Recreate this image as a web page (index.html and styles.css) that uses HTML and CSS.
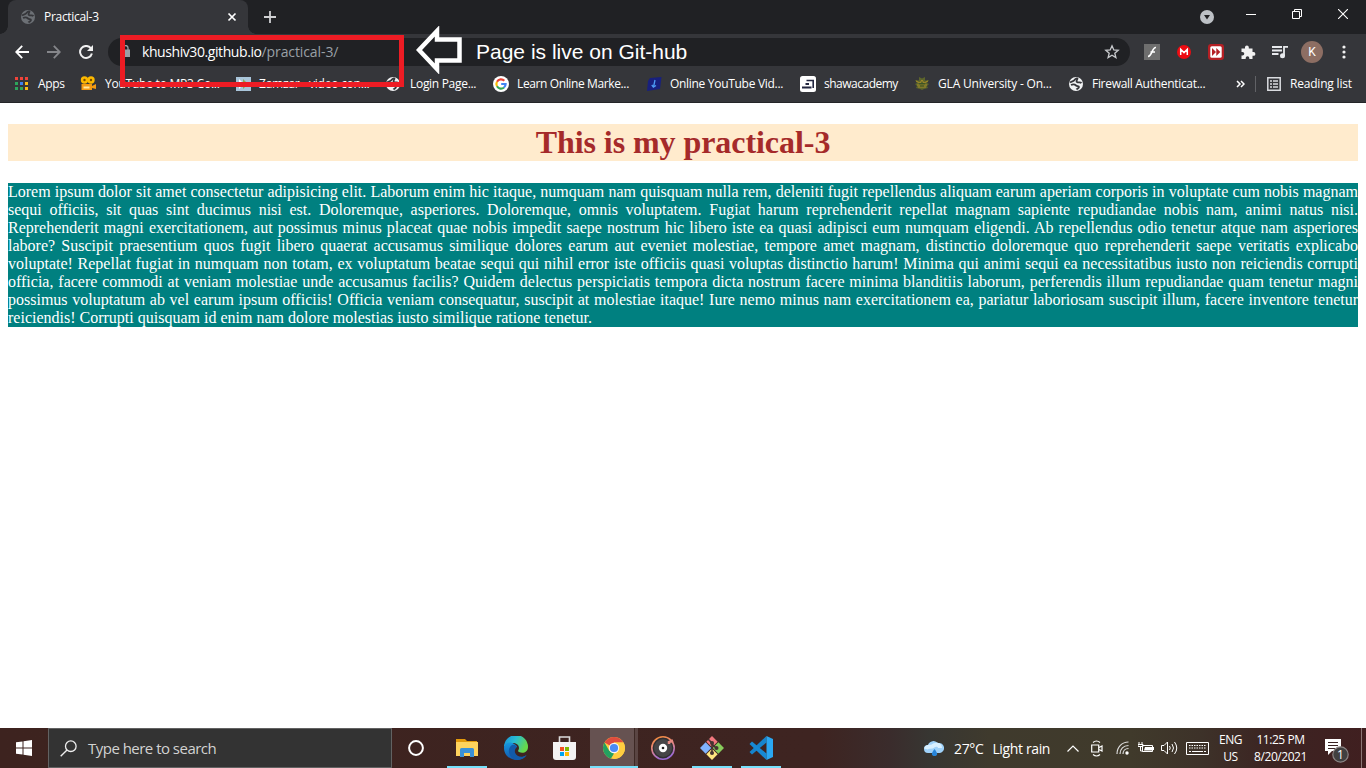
FILE: index.html
```html
<!DOCTYPE html>
<html lang="en">
<head>
<meta charset="utf-8">
<title>Practical-3</title>
<link rel="stylesheet" href="styles.css">
</head>
<body>
<div class="screen">
  <header class="tabstrip">
    <div class="tab">
      <svg class="i16" viewBox="0 0 16 16"><circle cx="8" cy="8" r="7" fill="#6c7075"/><path d="M2 6.500C3.500 5 5.500 5.500 6.500 4S9 2 9.500 2.500 7.500 5 9 6s3-.5 4.500 1M3 9c2-1 4-.5 5 .5s3 0 3 1.500-2 1.500-2.500 2.500" fill="none" stroke="#35363a" stroke-width="1.800"/></svg>
      <span class="tab-title">Practical-3</span>
      <svg class="tab-close" viewBox="0 0 10 10"><path d="M1.500 1.500l7 7M8.500 1.500l-7 7" stroke="#fff" stroke-width="1.700"/></svg>
    </div>
    <svg class="newtab" viewBox="0 0 12 12"><path d="M6 0v12M0 6h12" stroke="#d0d1d3" stroke-width="1.800"/></svg>
    <div class="winctl">
      <svg width="14" height="14" viewBox="0 0 14 14"><circle cx="7" cy="7" r="7" fill="#bdc1c6"/><path d="M4 5h6L7 9.500z" fill="#202124"/></svg>
      <svg class="min" width="10" height="10" viewBox="0 0 10 10"><path d="M0 5.500h10" stroke="#fff"/></svg>
      <svg class="restore" width="10" height="10" viewBox="0 0 10 10"><path d="M.5 2.500h7v7h-7zM2.500 2.500v-2h7v7h-2" fill="none" stroke="#fff"/></svg>
      <svg class="close" width="10" height="10" viewBox="0 0 10 10"><path d="M0 0l10 10M10 0L0 10" stroke="#fff" stroke-width="1.100"/></svg>
    </div>
  </header>

  <div class="toolbar">
    <div class="nav">
      <svg width="14" height="14" viewBox="0 0 14 14"><path d="M14 7H1.500M7.200 .8L1.200 7l6 6.200" fill="none" stroke="#fff" stroke-width="1.800"/></svg>
      <svg width="14" height="14" viewBox="0 0 14 14"><path d="M0 7h12.500M6.800 .8l6 6.200-6 6.200" fill="none" stroke="#85868a" stroke-width="1.800"/></svg>
      <svg width="14" height="14" viewBox="0 0 14 14"><path d="M11.800 3.200A6 6 0 1 0 12.900 8.500" fill="none" stroke="#f1f1f1" stroke-width="2"/><path d="M14 0v6H8z" fill="#f1f1f1"/></svg>
    </div>
    <div class="omnibox">
      <svg class="lock" width="9" height="12" viewBox="0 0 9 12"><path d="M0 4.500h9V12H0z" fill="#9aa0a6"/><path d="M2 5V3a2.400 2.400 0 0 1 5 0v2" fill="none" stroke="#9aa0a6" stroke-width="1.300"/></svg>
      <div class="url"><span class="host">khushiv30.github.io</span><span class="path">/practical-3/</span></div>
      <svg class="star" width="16" height="16" viewBox="0 0 16 16"><path d="M8 1.800l1.800 4.100 4.400.4-3.400 2.900 1.100 4.400L8 11.300l-3.900 2.300 1.100-4.400-3.400-2.900 4.400-.4z" fill="none" stroke="#c8cacd" stroke-width="1.300"/></svg>
    </div>
    <div class="exts">
      <svg width="16" height="16" viewBox="0 0 16 16"><path d="M0 0h16v16H0z" fill="#6e6e6e"/><path d="M12 3.500C8 3 8 12.500 4 12.300M6.500 8H11" fill="none" stroke="#fff" stroke-width="1.700"/></svg>
      <svg width="16" height="16" viewBox="0 0 16 16"><circle cx="8" cy="8" r="7" fill="#ed0c12"/><path d="M4.700 11V5.300L8 8.600l3.300-3.300V11" fill="none" stroke="#fff" stroke-width="1.500"/></svg>
      <svg width="16" height="16" viewBox="0 0 16 16"><rect width="16" height="16" rx="3" fill="#b51f24"/><rect x="2.300" y="2.300" width="11.400" height="11.400" rx="1.500" fill="#fff"/><path d="M4 4l4 4-4 4zM8.300 4l4 4-4 4z" fill="#b51f24"/></svg>
      <svg width="16" height="16" viewBox="0 0 16 16"><path d="M1.500 4.500H5V3.300a1.900 1.900 0 0 1 3.800 0v1.200h3.700V8h1a1.900 1.900 0 0 1 0 3.800h-1V15H9.300v-1a1.800 1.800 0 0 0-3.600 0v1H1.500v-3.500h1a1.800 1.800 0 0 0 0-3.600h-1z" fill="#f1f1f1"/></svg>
      <svg width="17" height="14" viewBox="0 0 17 14"><path d="M0 2h10M0 5.500h10M0 9h6.500M12 11V1.800h4" fill="none" stroke="#e8eaed" stroke-width="1.800"/><circle cx="10.500" cy="10.800" r="2.500" fill="#e8eaed"/></svg>
      <div class="avatar">K</div>
      <svg width="4" height="14" viewBox="0 0 4 14"><g fill="#f1f1f1"><circle cx="2" cy="2" r="1.600"/><circle cx="2" cy="7" r="1.600"/><circle cx="2" cy="12" r="1.600"/></g></svg>
    </div>
  </div>

  <nav class="bookmarks">
    <div class="bm apps-bm"><svg class="i16" viewBox="0 0 16 16"><path d="M2 1h3v3H2zM7 1h3v3H7zM12 1h3v3h-3z" fill="#f0443a"/><path d="M2 6h3v3H2zM2 11h3v3H2zM7 11h3v3H7z" fill="#2da55b"/><path d="M7 6h3v3H7z" fill="#3b82f0"/><path d="M12 6h3v3h-3zM12 11h3v3h-3z" fill="#f9bc15"/></svg><span>Apps</span></div>
    <div class="bm youtube"><svg class="i16" viewBox="0 0 16 16"><circle cx="4.500" cy="4" r="3.700" fill="#fcb900"/><circle cx="11" cy="4" r="3.700" fill="#fcb900"/><circle cx="4.500" cy="4" r="1.200" fill="#7a4b00"/><circle cx="11" cy="4" r="1.200" fill="#7a4b00"/><path d="M1.500 8H12v6H1.500zM12 10l4-2v5l-4-1z" fill="#f39a12"/><path d="M3.500 10.500h6v2h-6z" fill="#ffe9a0"/></svg><span>YouTube to MP3 Co...</span></div>
    <div class="bm zamzar"><svg class="i16" viewBox="0 0 16 16"><path d="M1 1h15v14H1z" fill="#a9c5da"/><path d="M4 3l5 5-5 5z" fill="#fff"/><path d="M8 3l5 5-5 5z" fill="#88ad58"/></svg><span>Zamzar - video con...</span></div>
    <div class="bm login"><svg class="i16" viewBox="0 0 16 16"><circle cx="8" cy="8" r="7" fill="#f1f3f4"/><path d="M2 6.500C3.500 5 5.500 5.500 6.500 4S9 2 9.500 2.500 7.500 5 9 6s3-.5 4.500 1M3 9c2-1 4-.5 5 .5s3 0 3 1.500-2 1.500-2.500 2.500" fill="none" stroke="#35363a" stroke-width="1.800"/></svg><span>Login Page...</span></div>
    <div class="bm learn"><svg class="i16" viewBox="0 0 16 16"><circle cx="8" cy="8" r="8" fill="#fff"/><g fill="none" stroke-width="2.200"><path d="M4 5.700A4.600 4.600 0 0 1 11.300 4.800" stroke="#ea4335"/><path d="M4 10.300a4.600 4.600 0 0 1 0-4.600" stroke="#fbbc05"/><path d="M4 10.300a4.600 4.600 0 0 0 7 1.200" stroke="#34a853"/><path d="M11 11.500A4.600 4.600 0 0 0 12.600 8H8.200" stroke="#4285f4"/></g></svg><span>Learn Online Marke...</span></div>
    <div class="bm video"><svg class="i16" viewBox="0 0 16 16"><path d="M4 2l11.500-1-1.500 12-13 2L2 5z" fill="#18207e"/><path d="M9 4l-1.500 7M5.800 9l1.600 2.200L10 9.500" fill="none" stroke="#4d9cf5" stroke-width="1.300"/></svg><span>Online YouTube Vid...</span></div>
    <div class="bm shaw"><svg class="i16" viewBox="0 0 16 16"><rect width="16" height="16" rx="2.500" fill="#fff"/><path d="M6.500 4.500h6.700V12" fill="none" stroke="#222640" stroke-width="1.600"/><path d="M5.500 8H9M2 11.500h9.500" fill="none" stroke="#222640" stroke-width="1.800"/></svg><span>shawacademy</span></div>
    <div class="bm gla"><svg class="i16" viewBox="0 0 16 16"><path d="M1 4l4 .5L5 1l3 1.500L11 1v3.500L15 4l-2 3 2 1-2 2 1 2-4 1-2 1-2-1-4-1 1-2-2-2 2-1z" fill="#5d652b"/><path d="M2 5l4 2 2-3 2 3 4-2M3 9h10M4 11h8" fill="none" stroke="#a58c28"/><path d="M5 7.800h6M6 10h4" stroke="#314d24"/></svg><span>GLA University - On...</span></div>
    <div class="bm firewall"><svg class="i16" viewBox="0 0 16 16"><circle cx="8" cy="8" r="7" fill="#f1f3f4"/><path d="M2 6.500C3.500 5 5.500 5.500 6.500 4S9 2 9.500 2.500 7.500 5 9 6s3-.5 4.500 1M3 9c2-1 4-.5 5 .5s3 0 3 1.500-2 1.500-2.500 2.500" fill="none" stroke="#35363a" stroke-width="1.800"/></svg><span>Firewall Authenticat...</span></div>
    <div class="bm"><svg width="9" height="8" viewBox="0 0 9 8"><path d="M1 1l3 3-3 3M5 1l3 3-3 3" fill="none" stroke="#fff" stroke-width="1.500"/></svg></div>
    <div class="sep"></div>
    <div class="bm reading"><svg width="14" height="14" viewBox="0 0 14 14"><path d="M.8 .8h12.400v12.400H.8z" fill="none" stroke="#dadce0" stroke-width="1.500"/><path d="M3 4h2M3 7h2M3 10h2M6 4h5M6 7h5M6 10h5" stroke="#dadce0" stroke-width="1.500"/></svg><span>Reading list</span></div>
  </nav>

  <main class="page">
    <h1>This is my practical-3</h1>
    <p>Lorem ipsum dolor sit amet consectetur adipisicing elit. Laborum enim hic itaque, numquam nam quisquam nulla rem, deleniti fugit repellendus aliquam earum aperiam corporis in voluptate cum nobis magnam sequi officiis, sit quas sint ducimus nisi est. Doloremque, asperiores. Doloremque, omnis voluptatem. Fugiat harum reprehenderit repellat magnam sapiente repudiandae nobis nam, animi natus nisi. Reprehenderit magni exercitationem, aut possimus minus placeat quae nobis impedit saepe nostrum hic libero iste ea quasi adipisci eum numquam eligendi. Ab repellendus odio tenetur atque nam asperiores labore? Suscipit praesentium quos fugit libero quaerat accusamus similique dolores earum aut eveniet molestiae, tempore amet magnam, distinctio doloremque quo reprehenderit saepe veritatis explicabo voluptate! Repellat fugiat in numquam non totam, ex voluptatum beatae sequi qui nihil error iste officiis quasi voluptas distinctio harum! Minima qui animi sequi ea necessitatibus iusto non reiciendis corrupti officia, facere commodi at veniam molestiae unde accusamus facilis? Quidem delectus perspiciatis tempora dicta nostrum facere minima blanditiis laborum, perferendis illum repudiandae quam tenetur magni possimus voluptatum ab vel earum ipsum officiis! Officia veniam consequatur, suscipit at molestiae itaque! Iure nemo minus nam exercitationem ea, pariatur laboriosam suscipit illum, facere inventore tenetur reiciendis! Corrupti quisquam id enim nam dolore molestias iusto similique ratione tenetur.</p>
  </main>

  <footer class="taskbar">
    <div class="start"><svg width="16" height="16" viewBox="0 0 16 16"><path d="M0 2.300L6.500 1.400v6.100H0zM7.500 1.200L16 0v7.500H7.500zM0 8.500h6.500v6.100L0 13.700zM7.500 8.500H16V16l-8.500-1.200z" fill="#fff"/></svg></div>
    <div class="search"><svg width="17" height="17" viewBox="0 0 17 17"><circle cx="10.800" cy="6.200" r="5.300" fill="none" stroke="#eee" stroke-width="1.300"/><path d="M7 10L.7 16.300" stroke="#eee" stroke-width="1.400"/></svg><span>Type here to search</span></div>
    <div class="apps">
      <div class="app cortana"><svg width="16" height="16" viewBox="0 0 16 16"><circle cx="8" cy="8" r="6.900" fill="none" stroke="#fff" stroke-width="2"/></svg></div>
      <div class="app open"><svg width="22" height="20" viewBox="0 0 22 20"><path d="M0 1h9l2 2h10v5H0z" fill="#e39a0b"/><path d="M0 4h22v14H0z" fill="#ffd35d"/><path d="M4 19v-7.500q0-1.500 1.500-1.500h11q1.500 0 1.500 1.500V19h-4v-4H8v4z" fill="#3b91d7"/></svg></div>
      <div class="app"><svg width="24" height="24" viewBox="0 0 24 24"><defs><linearGradient id="eg" x1="0" y1="0" x2="1" y2=".4"><stop offset="0" stop-color="#188cd8"/><stop offset=".5" stop-color="#29bdd2"/><stop offset="1" stop-color="#66d84b"/></linearGradient><linearGradient id="eb" x1="0" y1="0" x2="0" y2="1"><stop offset="0" stop-color="#1698df"/><stop offset="1" stop-color="#1358ad"/></linearGradient></defs><path d="M0 11A12 12 0 0 1 24 11c0 5-5 7-9 5-2-1 0-2 0-4 0-6-10-7-15-1z" fill="url(#eg)"/><path d="M0 12c0-5 6-7 10-4 2 1 3 2 3 3-5-1-6 8 2 10 3 .8 6-1 7.500-2C16 28 0 24 0 12z" fill="url(#eb)"/><path d="M8 9c-6 4-3 14 5 15 4 0 8-2 9.700-5-4 3-10 2-11.500-2-.8-2-.2-4.500 1.800-6C12 9 10 8.300 8 9z" fill="#125aa9"/></svg></div>
      <div class="app store"><svg width="24" height="24" viewBox="0 0 24 24"><path d="M7.500 7V1h10v6" fill="none" stroke="#ddd" stroke-width="1.600"/><path d="M1 6h23v15q0 3-3 3H4q-3 0-3-3z" fill="#f3f3f3"/><path d="M8 11h4v4H8z" fill="#f25022"/><path d="M13 11h4v4h-4z" fill="#7fba00"/><path d="M8 16h4v4H8z" fill="#00a4ef"/><path d="M13 16h4v4h-4z" fill="#ffb900"/></svg></div>
      <div class="app open active"><svg width="22" height="22" viewBox="0 0 22 22"><circle cx="11" cy="11" r="11" fill="#ffcd40"/><path d="M11 11L1.500 5.500A11 11 0 0 1 20.500 5.500H11z" fill="#df4c3e"/><path d="M1.500 5.500L6.200 13.800 11 16.500 8 21.600A11 11 0 0 1 1.500 5.500z" fill="#23a160"/><path d="M15.800 13.800L11 22a11 11 0 0 0 9.500-16.500H11z" fill="#ffcd40"/><circle cx="11" cy="11" r="5.200" fill="#f5f5f5"/><circle cx="11" cy="11" r="4.100" fill="#4a8af4"/></svg></div>
      <div class="app"><svg width="24" height="24" viewBox="0 0 24 24"><defs><linearGradient id="gr" x1="0" y1="0" x2=".3" y2="1"><stop offset="0" stop-color="#f28a32"/><stop offset=".5" stop-color="#e68782"/><stop offset="1" stop-color="#9b6ad3"/></linearGradient></defs><circle cx="12" cy="12" r="11.200" fill="#302f31" stroke="url(#gr)" stroke-width="1.600"/><circle cx="12" cy="12" r="9" fill="#464547"/><path d="M18 8V6l4-1.500" fill="none" stroke="#e88a83" stroke-width="2.500"/><circle cx="12" cy="12" r="4.200" fill="#fff"/><circle cx="12" cy="12" r="1.300" fill="#222"/></svg></div>
      <div class="app open"><svg width="24" height="24" viewBox="0 0 24 24"><g transform="rotate(45 12 12)"><rect x="3.500" y="3.500" width="8" height="8" fill="#f1787f"/><rect x="12.500" y="3.500" width="8" height="8" fill="#88cc5c"/><rect x="3.500" y="12.500" width="8" height="8" fill="#80b3ff"/><rect x="12.500" y="12.500" width="8" height="8" fill="#ffe680"/></g><path d="M8 3l4 4v10M12 8l4 4" fill="none" stroke="#453231" stroke-width="1.600"/><g fill="#453231"><circle cx="12" cy="7" r="2"/><circle cx="12" cy="17" r="2"/><circle cx="16.500" cy="12" r="2"/></g></svg></div>
      <div class="app open"><svg width="24" height="24" viewBox="0 0 24 24"><path d="M17.500 0v6.500L3 18.500 .5 16z" fill="#1684cc"/><path d="M17.500 24v-6.500L3 5.500 .5 8z" fill="#1789d4"/><path d="M17.500 0L24 3v18l-6.500 3z" fill="#2aa7f2"/></svg></div>
    </div>
    <div class="tray">
      <svg width="20" height="17" viewBox="0 0 20 17"><path d="M4 13a4 4 0 0 1 0-8A6 6 0 0 1 14 3a5 5 0 0 1 2 10z" fill="#9fd2fa"/><path d="M2 9c1-4 5-1 7-3s7-2 7 2" fill="none" stroke="#d8f0ff" stroke-width="4"/><path d="M10.500 9c-4 5-3 7 0 7s4-2 0-7z" fill="#2785d9"/></svg>
      <div class="weather"><span>27°C</span><span>Light rain</span></div>
      <svg class="chev" width="12" height="7" viewBox="0 0 12 7"><path d="M.5 6.500L6 1l5.500 5.500" fill="none" stroke="#fff" stroke-width="1.200"/></svg>
      <svg class="meet" width="12" height="17" viewBox="0 0 12 17"><path d="M.7 5h7v7h-7zM8 7.500l3-1.500v5L8 9.500M2 2.500q3.500-3 7 0M2 14.500q3.500 3 7 0" fill="none" stroke="#fff" stroke-width="1.200"/></svg>
      <svg class="wifi" width="13" height="14" viewBox="0 0 13 14"><g fill="none" stroke="#ddd" stroke-width="1.200"><path d="M1 13C1 6 6 1 12.500 1M4 13c0-5 3.500-8.500 8.500-8.500M7 13c0-3 2-5.500 5.500-5.500"/></g><circle cx="11" cy="12" r="1.700" fill="#fff"/></svg>
      <svg class="batt" width="16" height="12" viewBox="0 0 16 12"><path d="M4.500 3.500h10v6h-10zM15.500 5v3" fill="none" stroke="#fff"/><path d="M7 5h7v3.500H6z" fill="#fff"/><path d="M1 0v2M4 0v2M0 2.500h5v2H0zM2.500 5v4H5" fill="none" stroke="#fff"/></svg>
      <svg class="vol" width="17" height="14" viewBox="0 0 17 14"><path d="M.5 4.500h2.500L6.500 1v12L3 9.500H.5zM8.500 5q1.500 2 0 4M11 3q3 4 0 8M13.500 1q4.500 6 0 12" fill="none" stroke="#fff"/></svg>
      <svg class="kbd" width="23" height="13" viewBox="0 0 23 13"><path d="M.5 .5h22v12H.5z" fill="none" stroke="#fff"/><path d="M3 3.500h17M3 6h17" stroke="#fff" stroke-dasharray="1.500 1"/><path d="M3 9.500h2M6 9.500h11M18 9.500h2" stroke="#fff"/></svg>
      <div class="lang"><span>ENG</span><span>US</span></div>
      <div class="clock"><span class="time">11:25 PM</span><span class="date">8/20/2021</span></div>
      <div class="notif"><svg width="24" height="25" viewBox="0 0 24 25"><path d="M0 1h16v12H7l-4 4v-4H0z" fill="#fff"/><path d="M3 4.500h10M3 7.500h10M3 10.500h7" stroke="#3b2424" stroke-width="1.200"/><circle cx="15.500" cy="16.500" r="7.700" fill="#414040" stroke="#8c8585" stroke-width="1.200"/></svg><span class="count">1</span></div>
      <div class="peek"></div>
    </div>
  </footer>

  <div class="mark-box"></div>
  <svg class="mark-arrow" width="47" height="48" viewBox="0 0 47 48"><path d="M3 24L21 5V13.500H43.500V34.500H21V43z" fill="#202124" stroke="#fff" stroke-width="4.500"/></svg>
  <div class="mark-text">Page is live on Git-hub</div>
</div>
</body>
</html>
```
FILE: styles.css
```css
* { box-sizing: border-box; }
body { margin: 0; background: #fff; overflow: hidden; font-family: "Open Sans", "Noto Sans", sans-serif; font-size: 12px; color: #fff; }
svg { display: block; flex: none; }
.screen { position: relative; width: 1366px; height: 768px; display: flex; flex-direction: column; }
.i16 { width: 16px; height: 16px; }

.tabstrip { height: 34px; background: #202124; display: flex; align-items: center; padding-left: 8px; flex: none; }
.tab { width: 240px; height: 34px; padding: 0 11px 0 12px; background: #35363a; border-radius: 8px 8px 0 0; display: flex; align-items: center; position: relative; }
.tab::before, .tab::after { content: ""; position: absolute; bottom: 0; width: 8px; height: 8px; }
.tab::before { left: -8px; background: radial-gradient(circle at 0 0, #202124 7.5px, #35363a 8px); }
.tab::after { right: -8px; background: radial-gradient(circle at 100% 0, #202124 7.5px, #35363a 8px); }
.tab-title { margin: -1px 0 0 8px; flex: 1; letter-spacing: -.3px; }
.tab-close { width: 10px; height: 10px; }
.newtab { width: 12px; height: 12px; margin-left: 16px; }
.winctl { margin-left: auto; width: 166px; height: 34px; display: flex; align-items: center; }
.min { margin: -6px 36px 0 32px; }
.restore { margin-top: -6px; }
.close { margin: -6px 0 0 36px; }

.toolbar { height: 36px; background: #35363a; display: flex; align-items: center; padding: 0 0 0 15px; flex: none; }
.nav { display: flex; gap: 18px; width: 93px; }
.omnibox { width: 1022px; height: 28px; border-radius: 14px; background: #202124; display: flex; align-items: center; padding: 0 10px 0 13px; }
.lock { margin-top: -2px; }
.url { flex: 1; margin: -1px 0 0 12px; font-size: 14px; white-space: nowrap; }
.host { letter-spacing: -.42px; }
.path { color: #9aa0a6; letter-spacing: -.1px; }
.exts { display: flex; align-items: center; gap: 16px; margin-left: 14px; }
.avatar { width: 22px; height: 22px; margin: 0 3px 0 -4px; border-radius: 50%; background: #8d6e63; font: 12px/22px Roboto, sans-serif; text-align: center; }

.bookmarks { height: 33px; background: #35363a; border-bottom: 1px solid #242528; display: grid; grid-template-columns: 67px 155px 150px 108px 153px 154px 114px 154px 168px 19px 12px 1fr; align-items: center; padding: 0 0 4px 13px; flex: none; }
.bm { display: flex; align-items: center; gap: 8px; white-space: nowrap; letter-spacing: -.3px; }
.bm span { margin-top: -1px; }
.apps-bm, .login, .youtube, .reading { gap: 9px; }
.youtube { letter-spacing: -.23px; }
.zamzar { letter-spacing: -.22px; }
.learn { letter-spacing: -.38px; }
.shaw { letter-spacing: -.5px; }
.gla { letter-spacing: -.18px; }
.reading { letter-spacing: -.2px; }
.sep { width: 1px; height: 16px; background: #616266; }

.page { flex: 1; background: #fff; padding: 0 8px; font-family: "Liberation Serif", serif; font-size: 16px; }
h1 { margin: 21px 0 22px; height: 37px; background: blanchedalmond; color: brown; font-size: 32px; line-height: 37px; letter-spacing: -.06px; text-align: center; }
p { margin: 0; background: teal; color: #fff; line-height: 18px; text-align: justify; }

.taskbar { height: 40px; flex: none; display: flex; background: linear-gradient(90deg, #3d231f 0, #3e2421 820px, #3a2c2c 890px, #373632 930px, #3f3a2d 990px, #403a2b 1130px, #3d3229 1200px, #3c2422 1270px, #401f20 100%); }
.start { width: 48px; display: grid; place-items: center; }
.search { width: 344px; background: #333; border: 1px solid #626262; display: flex; align-items: center; padding-left: 11px; gap: 11px; font-size: 15px; color: #d2d2d2; letter-spacing: -.52px; }
.apps { display: flex; gap: 1px; }
.app { width: 48px; height: 40px; display: grid; place-items: center; }
.cortana { margin-right: 2px; }
.store { padding-right: 2px; }
.app.open { background: linear-gradient(#76e0fb, #76e0fb) center bottom / 40px 2px no-repeat; }
.app.active { background: linear-gradient(#76e0fb, #76e0fb) center bottom / 48px 2px no-repeat, linear-gradient(90deg, #665251 44px, #3d2925 44px, #3d2925 45px, #5a4543 45px); }
.tray { margin-left: auto; display: flex; align-items: center; white-space: nowrap; width: 443px; padding-left: 1px; }
.weather { display: flex; gap: 9px; font-size: 14px; margin-left: 10px; width: 97px; letter-spacing: -.36px; }
.chev { margin-left: 16px; }
.meet { margin-left: 12px; }
.wifi { margin-left: 13px; }
.batt { margin-left: 9px; }
.vol { margin-left: 7px; }
.kbd { margin-left: 8px; }
.lang, .clock { display: flex; flex-direction: column; align-items: center; line-height: 17px; letter-spacing: -.45px; margin-top: -1px; }
.lang { margin-left: 9px; width: 25px; }
.clock { margin-left: 11px; width: 53px; }
.notif { margin-left: 18px; position: relative; padding-top: 5px; }
.count { position: absolute; left: 12px; top: 13px; font-size: 12px; line-height: 17px; }
.peek { margin-left: auto; width: 5px; height: 40px; border-left: 1px solid #8b7675; }

.mark-box { position: absolute; left: 120px; top: 35px; width: 284px; height: 52px; border: 5px solid #ed1c24; }
.mark-arrow { position: absolute; left: 416px; top: 26px; }
.mark-text { position: absolute; left: 476px; top: 40px; font: 21px/24px "Liberation Sans", Arial, sans-serif; white-space: nowrap; }
```
